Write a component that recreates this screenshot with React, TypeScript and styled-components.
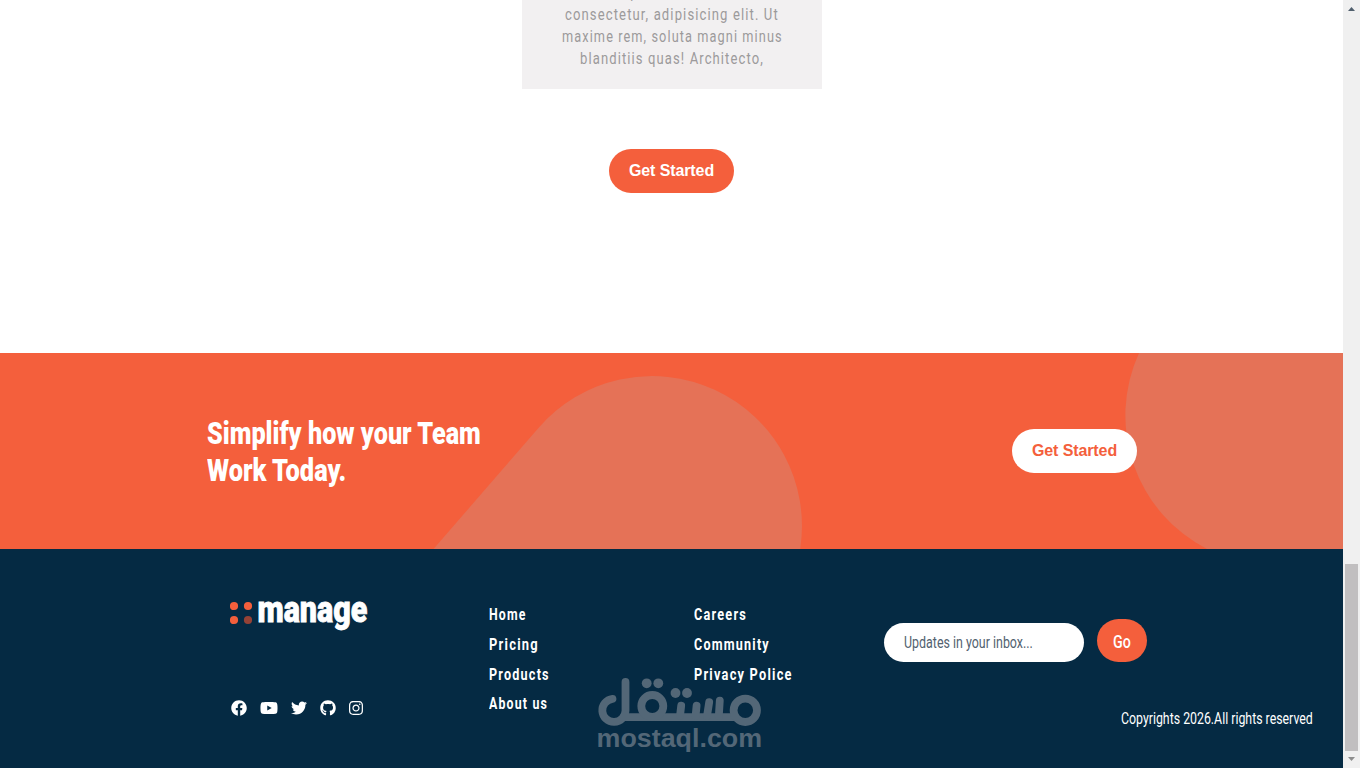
import { useLayoutEffect, useRef, useState } from "react";
import styled, { createGlobalStyle } from "styled-components";
import { FaFacebook, FaGithub, FaInstagram, FaTwitter, FaYoutube } from "react-icons/fa";

const orange = "#f45f3c";
const navy = "#052a43";

const GlobalStyle = createGlobalStyle`
  * {
    box-sizing: border-box;
  }

  body {
    margin: 0;
    background: #fff;
    font-family: Roboto, "Liberation Sans", sans-serif;
    font-size: 16px;
    overflow: hidden;
  }
`;

const Window = styled.div`
  display: flex;
  height: 768px;
  overflow: hidden;
`;

const Page = styled.div`
  position: relative;
  flex: 1;
  display: flex;
  flex-direction: column;
  overflow: hidden;
`;

/* condensed text */

const TextBox = styled.span<{ $width: number }>`
  display: block;
  width: ${(p) => p.$width}px;
`;

const TextRun = styled.span`
  display: inline-block;
  white-space: nowrap;
  transform-origin: 0 50%;
`;

function Condensed({ width, children }: { width: number; children: string }) {
  const ref = useRef<HTMLSpanElement>(null);
  const [scale, setScale] = useState(1);

  useLayoutEffect(() => {
    if (ref.current) {
      setScale(width / ref.current.offsetWidth);
    }
  }, [width, children]);

  return (
    <TextBox $width={width}>
      <TextRun ref={ref} style={{ transform: `scaleX(${scale})` }}>
        {children}
      </TextRun>
    </TextBox>
  );
}

/* testimonials */

const Testimonials = styled.section`
  display: flex;
  flex-direction: column;
  align-items: center;
  flex: none;
  height: 353px;
`;

const Card = styled.div`
  display: flex;
  flex-direction: column;
  align-items: center;
  justify-content: flex-end;
  flex: none;
  width: 300px;
  height: 89px;
  margin: 0 0 60px 1px;
  padding-bottom: 19px;
  overflow: hidden;
  background: #f2f0f1;
  color: #9c9a9b;
  font-size: 16.5px;
  font-weight: 400;
  letter-spacing: 1.4px;
  line-height: 22px;
`;

const Button = styled.button<{ $light?: boolean }>`
  flex: none;
  width: 125px;
  height: 44px;
  padding: 0;
  border: 0;
  border-radius: 22px;
  background: ${(p) => (p.$light ? "#fff" : orange)};
  color: ${(p) => (p.$light ? orange : "#fff")};
  font: bold 16px/42px "Liberation Sans", Arial, sans-serif;
  letter-spacing: -0.1px;
`;

/* call to action */

const Banner = styled.section`
  position: relative;
  display: flex;
  align-items: center;
  justify-content: space-between;
  flex: none;
  height: 196px;
  padding: 0 206px 0 207px;
  background: ${orange};
`;

const Pattern = styled.svg`
  position: absolute;
  inset: 0;
  fill: #e57257;
`;

const Title = styled.h2`
  position: relative;
  margin: 1px 0 0;
  color: #fff;
  font-size: 32px;
  font-weight: 900;
  line-height: 37px;
`;

const BannerAction = styled.div`
  position: relative;
  display: flex;
`;

/* footer */

const FooterBar = styled.footer`
  display: grid;
  grid-template-columns: 259px 205px 190px 1fr;
  flex: 1;
  padding: 50px 30px 0 230px;
  background: ${navy};
  color: #fff;
`;

const Brand = styled.div`
  display: flex;
  flex-direction: column;
`;

const Social = styled.div`
  display: flex;
  align-items: center;
  gap: 13px;
  margin: 61px 0 0 1px;

  svg {
    width: 16px;
    height: 16px;
  }

  svg:nth-child(2) {
    width: 18px;
  }

  svg:last-child {
    margin-left: -1px;
  }
`;

const Links = styled.nav`
  display: flex;
  flex-direction: column;
  padding-top: 1px;
  font-size: 16.5px;
  font-weight: 700;
  letter-spacing: 1.6px;
  line-height: 29.8px;
`;

const Subscribe = styled.form`
  display: flex;
  align-items: flex-end;
  gap: 13px;
  margin-top: 20px;
`;

const EmailField = styled.div`
  width: 200px;
  height: 39px;
  padding-left: 20px;
  border-radius: 20px;
  background: #fff;
  color: #52626f;
  font-size: 16px;
  line-height: 39px;
`;

const GoButton = styled.button`
  display: flex;
  align-items: center;
  justify-content: center;
  width: 50px;
  height: 43px;
  padding: 2px 0 0;
  border: 0;
  border-radius: 22px;
  background: ${orange};
  color: #fff;
  font: 500 19px Roboto, sans-serif;
`;

const Copyright = styled.div`
  display: flex;
  justify-content: flex-end;
  margin-top: 47px;
  line-height: 20px;
`;

const Watermark = styled.svg`
  position: absolute;
  left: 590px;
  top: 670px;
`;

/* scrollbar */

const Scrollbar = styled.div`
  display: flex;
  flex-direction: column;
  align-items: center;
  width: 17px;
  background: #f0f0f0;
`;

const Thumb = styled.div`
  width: 13px;
  height: 187px;
  margin-top: auto;
  background: #c1bfc0;
`;

const Arrow = styled.svg`
  display: block;
  flex: none;
  width: 17px;
  height: 17px;
`;

function Logo() {
  return (
    <svg width="150" height="40" viewBox="0 0 150 40">
      <circle cx="4" cy="7" r="4.1" fill={orange} />
      <circle cx="18" cy="7" r="4.1" fill={orange} />
      <circle cx="4" cy="21" r="4.1" fill={orange} />
      <circle cx="18" cy="21" r="4.1" fill="#954236" />
      <text
        x="27.4"
        y="23.2"
        fill="#fff"
        stroke="#fff"
        strokeWidth="0.8"
        fontFamily="Roboto, sans-serif"
        fontSize="37"
        fontWeight="900"
        textLength="110"
        lengthAdjust="spacingAndGlyphs"
      >
        manage
      </text>
    </svg>
  );
}

function Mostaql() {
  return (
    <Watermark width="180" height="90" viewBox="0 0 180 90" fill="#536777">
      <g fill="none" stroke="#536777" strokeWidth="7.8">
        <path strokeLinecap="round" d="M22.5 28.8A11.6 11.6 0 1 0 35.5 40.5V12" />
        <path d="M32 47.1H147.5" />
        <circle cx="155.3" cy="40.3" r="11.7" />
        <circle cx="62.3" cy="36" r="11" />
        <path
          strokeLinecap="round"
          d="M91.2 35.6L90 46M106.6 35.6L105.6 46M119.2 32.2L117 46M129.8 30.6L128.8 46"
        />
      </g>
      <circle cx="56.7" cy="13.3" r="4.9" />
      <circle cx="68.3" cy="13.3" r="4.9" />
      <circle cx="85.5" cy="23" r="4.9" />
      <circle cx="97" cy="23" r="4.9" />
      <text
        x="6.6"
        y="77.3"
        fontFamily="Liberation Sans, Arial, sans-serif"
        fontSize="26.5"
        fontWeight="700"
        textLength="165.5"
        lengthAdjust="spacingAndGlyphs"
      >
        mostaql.com
      </text>
    </Watermark>
  );
}

function App() {
  return (
    <>
      <GlobalStyle />
      <Window>
        <Page>
          <Testimonials>
            <Card>
              <Condensed width={184}>Lorem ipsum dolor sit amet</Condensed>
              <Condensed width={214}>consectetur, adipisicing elit. Ut</Condensed>
              <Condensed width={221}>maxime rem, soluta magni minus</Condensed>
              <Condensed width={184}>blanditiis quas! Architecto,</Condensed>
            </Card>
            <Button>Get Started</Button>
          </Testimonials>

          <Banner>
            <Pattern width="1343" height="196" viewBox="0 0 1343 196">
              <path d="M433.5 196L538 75.5A150 150 0 0 1 800.2 196Z" />
              <path d="M1139 0A150 150 0 0 0 1207 196H1343V0Z" />
            </Pattern>
            <Title>
              <Condensed width={274}>Simplify how your Team</Condensed>
              <Condensed width={139}>Work Today.</Condensed>
            </Title>
            <BannerAction>
              <Button $light>Get Started</Button>
            </BannerAction>
          </Banner>

          <FooterBar>
            <Brand>
              <Logo />
              <Social>
                <FaFacebook />
                <FaYoutube />
                <FaTwitter />
                <FaGithub />
                <FaInstagram />
              </Social>
            </Brand>
            <Links>
              <Condensed width={38}>Home</Condensed>
              <Condensed width={50}>Pricing</Condensed>
              <Condensed width={61}>Products</Condensed>
              <Condensed width={59}>About us</Condensed>
            </Links>
            <Links>
              <Condensed width={53}>Careers</Condensed>
              <Condensed width={76}>Community</Condensed>
              <Condensed width={99}>Privacy Police</Condensed>
            </Links>
            <div>
              <Subscribe>
                <EmailField>
                  <Condensed width={129}>Updates in your inbox...</Condensed>
                </EmailField>
                <GoButton type="button">
                  <Condensed width={18}>Go</Condensed>
                </GoButton>
              </Subscribe>
              <Copyright>
                <Condensed width={192}>Copyrights 2026.All rights reserved</Condensed>
              </Copyright>
            </div>
          </FooterBar>

          <Mostaql />
        </Page>

        <Scrollbar>
          <Arrow viewBox="0 0 17 17">
            <path d="M5 11L8.5 7L12 11Z" fill="#505f6d" />
          </Arrow>
          <Thumb />
          <Arrow viewBox="0 0 17 17">
            <path d="M5 6L8.5 10L12 6Z" fill="#8d8d8d" />
          </Arrow>
        </Scrollbar>
      </Window>
    </>
  );
}

export default App;
